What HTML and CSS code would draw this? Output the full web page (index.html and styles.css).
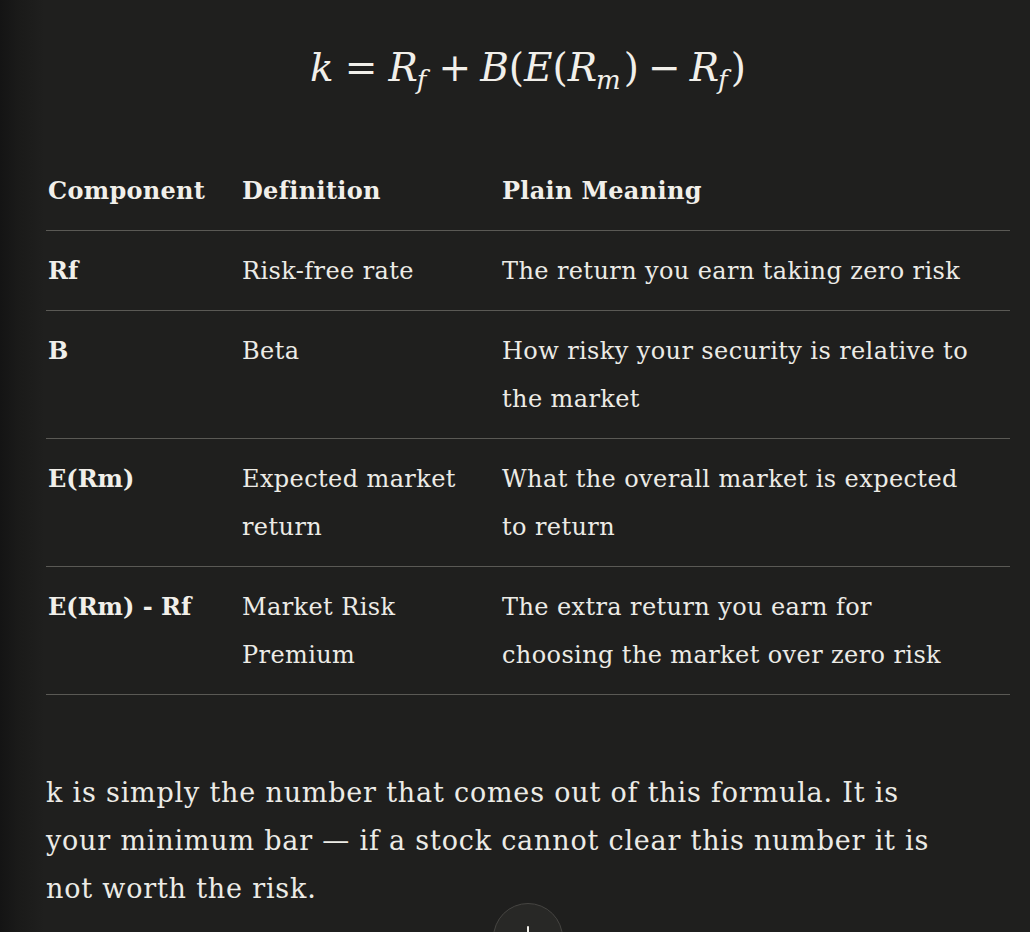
FILE: index.html
```html
<!DOCTYPE html>
<html lang="en">
<head>
<meta charset="utf-8">
<title>CAPM</title>
<link rel="stylesheet" href="styles.css">
</head>
<body>
<main class="content">
  <div class="formula">
    <span class="mi">k</span><span class="mo rel">=</span><span class="mi">R</span><sub class="sub">f</sub><span class="mo bin">+</span><span class="mi">B</span><span class="mp">(</span><span class="mi">E</span><span class="mp">(</span><span class="mi">R</span><sub class="sub">m</sub><span class="mp">)</span><span class="mo bin">−</span><span class="mi">R</span><sub class="sub">f</sub><span class="mp">)</span>
  </div>

  <table class="table">
    <colgroup>
      <col class="c1"><col class="c2"><col class="c3">
    </colgroup>
    <thead>
      <tr><th>Component</th><th>Definition</th><th>Plain Meaning</th></tr>
    </thead>
    <tbody>
      <tr><td class="key">Rf</td><td>Risk-free rate</td><td>The return you earn taking zero risk</td></tr>
      <tr><td class="key">B</td><td>Beta</td><td>How risky your security is relative to the market</td></tr>
      <tr><td class="key">E(Rm)</td><td>Expected market return</td><td>What the overall market is expected to return</td></tr>
      <tr><td class="key">E(Rm) - Rf</td><td>Market Risk Premium</td><td>The extra return you earn for choosing the market over zero risk</td></tr>
    </tbody>
  </table>

  <p class="para">k is simply the number that comes out of this formula. It is your minimum bar — if a stock cannot clear this number it is not worth the risk.</p>
</main>

<button class="scroll-btn" aria-label="Scroll to bottom">
  <svg width="20" height="20" viewBox="0 0 20 20" fill="none" stroke="#f2f0ea" stroke-width="2" stroke-linecap="round" stroke-linejoin="round"><path d="M10 2v15M4 11l6 6 6-6"/></svg>
</button>
</body>
</html>
```

FILE: styles.css
```css
html, body {
  margin: 0;
  padding: 0;
}
body {
  width: 1030px;
  height: 932px;
  overflow: hidden;
  background: linear-gradient(to right, #141414 0, #1a1a19 18px, #1f1f1e 44px);
  color: #ecebe6;
  font-family: "DejaVu Serif", serif;
}
.content {
  padding: 38px 20px 0 46px;
  width: 964px;
}
.formula {
  text-align: center;
  font-family: "DejaVu Serif", serif;
  font-size: 39px;
  line-height: 60px;
  height: 60px;
  color: #f1efea;
  white-space: nowrap;
}
.mi {
  font-style: italic;
}
.sub {
  font-style: italic;
  font-size: 26px;
  vertical-align: -8px;
  line-height: 0;
  margin-left: -1px;
  margin-right: 3px;
}
.mo.rel {
  margin: 0 11px;
}
.mo.bin {
  margin: 0 9px;
}
.mp {
  font-style: normal;
}
.table {
  margin-top: 53px;
  width: 964px;
  border-collapse: collapse;
  table-layout: fixed;
  font-size: 24px;
  letter-spacing: 0.4px;
  line-height: 48px;
}
.c1 { width: 194px; }
.c2 { width: 260px; }
.c3 { width: 510px; }
.table th,
.table td {
  text-align: left;
  vertical-align: top;
  padding: 16px 6px 15px 2px;
  border-bottom: 1px solid #5a5955;
}
.table th:last-child,
.table td:last-child {
  padding-right: 30px;
}
.table th {
  font-weight: bold;
  color: #f1efea;
  letter-spacing: 0.3px;
}
.table td.key {
  font-weight: bold;
  letter-spacing: 0;
  color: #f1efea;
}
.para {
  margin: 74px 0 0 0;
  width: 895px;
  font-size: 27px;
  letter-spacing: 0.8px;
  line-height: 48px;
  color: #ecebe6;
}
.scroll-btn {
  position: absolute;
  left: 493px;
  top: 903px;
  width: 70px;
  height: 70px;
  border-radius: 50%;
  background: #282826;
  border: 1px solid #464542;
  display: flex;
  align-items: flex-start;
  justify-content: center;
  padding: 21px 0 0 0;
  box-sizing: border-box;
}
```
